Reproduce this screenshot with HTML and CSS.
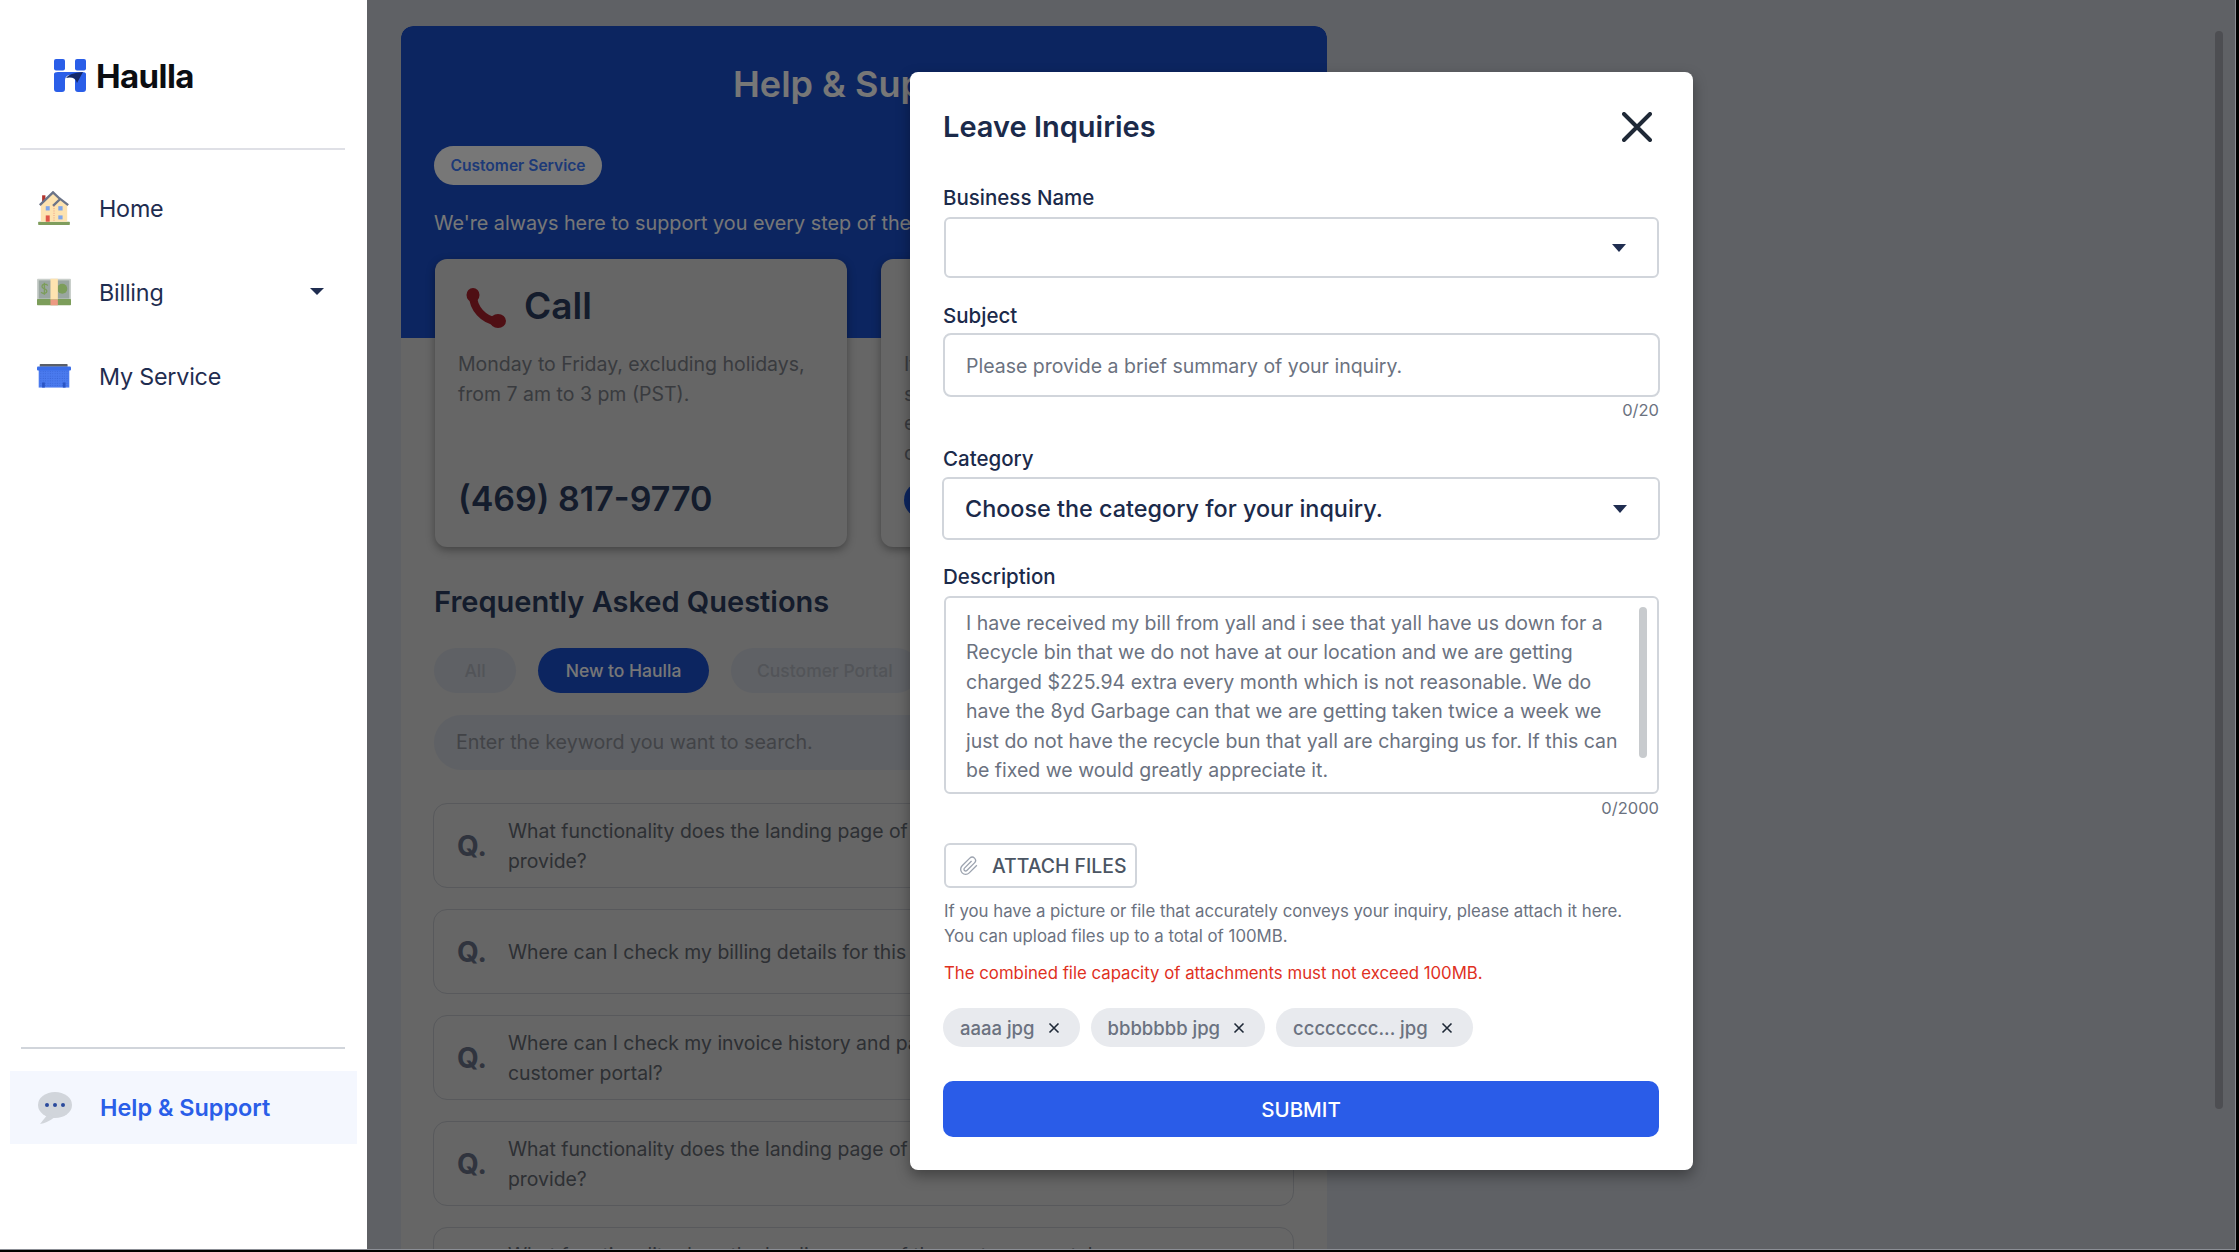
FILE: index.html
```html
<!DOCTYPE html>
<html lang="en">
<head>
<meta charset="utf-8">
<title>Haulla - Help &amp; Support</title>
<link rel="stylesheet" href="styles.css">
</head>
<body>
<div class="app">
  <aside class="sidebar">
    <div class="logo">
      <svg class="logo-mark" viewBox="0 0 32 33"><rect width="11" height="11.5" rx="2" fill="#2a5ee8"/><rect x="21" width="11" height="11.5" rx="2" fill="#2a5ee8"/><path d="M0 15Q0 13 4 13H28Q32 13 32 15V30a3 3 0 0 1-3 3h-5a3 3 0 0 1-3-3v-9a5 5 0 0 0-10 0v9a3 3 0 0 1-3 3H3a3 3 0 0 1-3-3Z" fill="#2a5ee8"/><path d="M12 19Q15 14 29 13L23 24Q21 17 12 19Z" fill="#14296b"/></svg>
      <span class="logo-text">Haulla</span>
    </div>
    <div class="rule"></div>
    <nav class="nav">
      <a class="nav-item">
        <svg class="nav-icon" viewBox="55 65 96 103"><rect x="55" y="158" width="96" height="10" rx="2" fill="#7f9d5d"/><rect x="67" y="78" width="10" height="22" fill="#b3342c"/><path d="M63 108L100 70L122 92L143 108V158H63Z" fill="#fde3b0"/><path d="M60 108L100 69L122 90M100 110L122 89L146 108" fill="none" stroke="#6b7488" stroke-width="7"/><rect x="78" y="111" width="12" height="13" fill="#7fa6ea"/><rect x="116" y="111" width="13" height="13" fill="#7fa6ea"/><rect x="116" y="139" width="13" height="12" fill="#7fa6ea"/><rect x="78" y="139" width="12" height="19" fill="#e05648"/><path d="M103 110V158" stroke="#ec9a82" stroke-width="3" stroke-dasharray="3 4"/></svg>
        <span>Home</span>
      </a>
      <a class="nav-item">
        <svg class="nav-icon" viewBox="52 328 101 79"><rect x="52" y="328" width="101" height="64" rx="3" fill="#c9cfcb"/><rect x="57" y="333" width="91" height="54" fill="#9aa6a0"/><rect x="52" y="388" width="101" height="19" rx="2" fill="#7c9d5a"/><circle cx="127" cy="358" r="15" fill="#7c9d5a"/><path d="M84 348Q76 341 68 347Q64 354 74 358Q84 362 80 369Q72 375 64 368M74 340V376" fill="none" stroke="#7c9d5a" stroke-width="4"/><rect x="92" y="328" width="22" height="62" fill="#fde3b0"/><rect x="92" y="390" width="22" height="17" fill="#ec9a82"/></svg>
        <span>Billing</span>
        <i class="caret caret-nav"></i>
      </a>
      <a class="nav-item">
        <svg class="nav-icon" viewBox="55 590 100 72"><defs><pattern id="bin-dots" width="7" height="7" patternUnits="userSpaceOnUse"><circle cx="3" cy="3" r="1.3" fill="#2a54c4"/></pattern></defs><rect x="63" y="591" width="82" height="8" rx="2" fill="#5a5f68"/><rect x="60" y="608" width="90" height="52" fill="#4a7aee"/><rect x="62" y="612" width="86" height="46" fill="url(#bin-dots)"/><rect x="55" y="598" width="100" height="12" rx="3" fill="#3b6ee8"/><rect x="70" y="645" width="8" height="15" fill="#2a54c4"/><rect x="131" y="645" width="8" height="15" fill="#2a54c4"/></svg>
        <span>My Service</span>
      </a>
    </nav>
    <div class="side-foot">
      <div class="rule rule-foot"></div>
      <a class="help-item">
        <svg class="nav-icon" viewBox="0 0 34 32"><ellipse cx="17" cy="13" rx="17" ry="13" fill="#d1d5db"/><path d="M10 22L2 32Q9 31 17 25Z" fill="#d1d5db"/><circle cx="9" cy="13" r="2" fill="#2b4a9c"/><circle cx="17" cy="13" r="2" fill="#2b4a9c"/><circle cx="25" cy="13" r="2" fill="#2b4a9c"/></svg>
        <span>Help &amp; Support</span>
      </a>
    </div>
  </aside>

  <main class="main">
    <section class="panel">
      <header class="hero">
        <h1 class="hero-title">Help &amp; Support</h1>
        <span class="badge">Customer Service</span>
        <p class="hero-sub">We're always here to support you every step of the way.</p>
      </header>
      <div class="contact-row">
        <article class="contact">
          <div class="contact-head">
            <svg class="phone" viewBox="0 0 41 41"><path d="M8 7C8 20 18 32 33 34" fill="none" stroke="#a9202b" stroke-width="8"/><ellipse cx="8" cy="7" rx="6.5" ry="7" fill="#a9202b"/><ellipse cx="33" cy="33" rx="8" ry="7" fill="#a9202b"/></svg>
            <h2>Call</h2>
          </div>
          <p class="contact-text">Monday to Friday, excluding holidays,<br>from 7 am to 3 pm (PST).</p>
          <div class="contact-number">(469) 817-9770</div>
        </article>
        <article class="contact">
          <div class="contact-head contact-head-inq"><h2>Inquiry</h2></div>
          <p class="contact-text">If you have a question,<br>send us an inquiry and<br>expect a reply soon from<br>our team.</p>
          <div class="contact-action">Leave Inquiries</div>
        </article>
      </div>
      <section class="faq">
        <h2 class="faq-title">Frequently Asked Questions</h2>
        <div class="tabs">
          <span class="tab tab-all">All</span>
          <span class="tab tab-active">New to Haulla</span>
          <span class="tab">Customer Portal</span>
        </div>
        <div class="search">Enter the keyword you want to search.</div>
        <ul class="faq-list">
          <li class="faq-item"><b>Q.</b><span>What functionality does the landing page of the customer portal<br>provide?</span></li>
          <li class="faq-item"><b>Q.</b><span>Where can I check my billing details for this account?</span></li>
          <li class="faq-item"><b>Q.</b><span>Where can I check my invoice history and pay my bill on the<br>customer portal?</span></li>
          <li class="faq-item"><b>Q.</b><span>What functionality does the landing page of the customer portal<br>provide?</span></li>
          <li class="faq-item"><b>Q.</b><span>What functionality does the landing page of the customer portal<br>provide?</span></li>
        </ul>
      </section>
    </section>
    <div class="scrim"></div>
    <div class="page-scroll"></div>
  </main>

  <form class="modal">
    <div class="modal-head">
      <h2>Leave Inquiries</h2>
      <svg class="close" viewBox="0 0 30 30"><path d="M2 2L28 28M28 2L2 28" stroke="#1f2937" stroke-width="4" stroke-linecap="round"/></svg>
    </div>
    <div class="fields">
      <div class="field">
        <label>Business Name</label>
        <div class="select select-name"><i class="caret"></i></div>
      </div>
      <div class="field">
        <label class="label-tight">Subject</label>
        <input class="text-input" type="text" placeholder="Please provide a brief summary of your inquiry.">
        <div class="count">0/20</div>
      </div>
      <div class="field field-category">
        <label class="label-mid">Category</label>
        <div class="select select-category"><span>Choose the category for your inquiry.</span><i class="caret"></i></div>
      </div>
      <div class="field field-desc">
        <label>Description</label>
        <div class="textarea">I have received my bill from yall and i see that yall have us down for a Recycle bin that we do not have at our location and we are getting charged $225.94 extra every month which is not reasonable. We do have the 8yd Garbage can that we are getting taken twice a week we just do not have the recycle bun that yall are charging us for. If this can be fixed we would greatly appreciate it.<i class="thumb"></i></div>
        <div class="count count-desc">0/2000</div>
      </div>
      <div class="attach-block">
        <button class="attach" type="button">
          <svg class="clip" viewBox="0 0 24 24"><path d="M21.44 11.05l-9.19 9.19a6 6 0 0 1-8.49-8.49l9.19-9.19a4 4 0 0 1 5.66 5.66l-9.2 9.19a2 2 0 0 1-2.83-2.83l8.49-8.48" fill="none" stroke="#9ca3af" stroke-width="1.6"/></svg>
          ATTACH FILES
        </button>
        <p class="help-text">If you have a picture or file that accurately conveys your inquiry, please attach it here.<br>You can upload files up to a total of 100MB.</p>
        <p class="error-text">The combined file capacity of attachments must not exceed 100MB.</p>
        <div class="files">
          <span class="file">aaaa jpg <svg class="file-x" viewBox="0 0 12 12"><path d="M1.5 1.5L10.5 10.5M10.5 1.5L1.5 10.5" stroke="#1f2937" stroke-width="1.6"/></svg></span>
          <span class="file">bbbbbbb jpg <svg class="file-x" viewBox="0 0 12 12"><path d="M1.5 1.5L10.5 10.5M10.5 1.5L1.5 10.5" stroke="#1f2937" stroke-width="1.6"/></svg></span>
          <span class="file">cccccccc... jpg <svg class="file-x" viewBox="0 0 12 12"><path d="M1.5 1.5L10.5 10.5M10.5 1.5L1.5 10.5" stroke="#1f2937" stroke-width="1.6"/></svg></span>
        </div>
        <button class="submit" type="button">SUBMIT</button>
      </div>
    </div>
  </form>
</div>
</body>
</html>
```
FILE: styles.css
```css
* { box-sizing: border-box; }
html, body { margin: 0; height: 100%; background: #000; overflow: hidden; }
body { font-family: Inter, "Noto Sans", sans-serif; color: #1f2d50; }
h1, h2, p, ul { margin: 0; padding: 0; }
ul { list-style: none; }

.app { position: relative; display: flex; width: 2236px; height: 1250px; border-right: 1px solid #8b8e95; border-bottom: 1px solid #8b8e95; overflow: hidden; }

/* Sidebar */
.sidebar { flex: 0 0 367px; display: flex; flex-direction: column; background: #fff; }
.logo { display: flex; align-items: center; gap: 10px; padding: 59px 0 0 54px; height: 92px; }
.logo-mark { width: 32px; height: 33px; flex: none; }
.logo-text { margin-top: 2px; font-size: 33px; font-weight: 700; color: #0b0d12; letter-spacing: -0.6px; line-height: 33px; }
.rule { height: 2px; margin: 56px 22px 0 20px; background: #dfe0e6; }
.nav { display: flex; flex-direction: column; margin-top: 16px; }
.nav-item { display: flex; align-items: center; gap: 28px; height: 84px; padding: 0 43px 0 37px; font-size: 23.3px; letter-spacing: -0.2px; }
.nav-icon { width: 34px; height: 34px; flex: none; }
.caret { display: block; width: 0; height: 0; border-left: 7px solid transparent; border-right: 7px solid transparent; border-top: 7px solid #1f2d50; margin-left: auto; }
.caret-nav { margin-top: -1px; }
.side-foot { margin-top: auto; padding-bottom: 105px; }
.rule-foot { margin: 0 22px 0 21px; background: #d1d5db; }
.help-item { display: flex; align-items: center; gap: 28px; height: 73px; margin: 22px 10px 0; padding-left: 28px; background: #f4f7fe; color: #2a5ee8; font-size: 23.4px; font-weight: 600; }

/* Main (under the scrim) */
.main { position: relative; flex: 1; padding: 26px 0 0 34px; background: #cbd0d8; overflow: hidden; }
.panel { width: 926px; background: #dadada; border-radius: 12px 12px 0 0; overflow: hidden; height: 1300px; }
.hero { height: 312px; padding: 33px 33px 0; background: #1a4fcd; color: #fff; border-radius: 12px 12px 0 0; }
.hero-title { font-size: 36px; font-weight: 600; line-height: 50px; text-align: center; }
.badge { display: block; width: 168px; height: 39px; margin-top: 37px; border-radius: 20px; background: #fff; color: #3f7cff; font-size: 15.6px; font-weight: 600; line-height: 39px; text-align: center; }
.hero-sub { margin-top: 23px; font-size: 19.8px; line-height: 30px; white-space: nowrap; }
.contact-row { display: flex; gap: 34px; margin-top: -79px; padding: 0 33px 0 34px; }
.contact { display: flex; flex-direction: column; flex: 0 0 412px; height: 288px; padding: 22px 22px 0 23px; border-radius: 12px; background: #dadada; box-shadow: 0 3px 8px rgba(0,0,0,.35); }
.contact-head { display: flex; align-items: center; gap: 18px; height: 48px; padding-left: 7px; }
.contact-head-inq { padding-left: 40px; }
.phone { width: 41px; height: 41px; margin-top: 7px; flex: none; }
.contact-head h2 { font-size: 37px; font-weight: 600; color: #2b3c5e; }
.contact-text { margin-top: 21px; font-size: 19.5px; line-height: 29.5px; color: #7a7f87; white-space: nowrap; }
.contact-number { margin-top: auto; padding-bottom: 23px; font-size: 34px; font-weight: 600; line-height: 50px; color: #2b3c5e; }
.contact-action { width: 200px; height: 36px; margin-top: auto; margin-bottom: 29px; border-radius: 18px; background: #1a4fcd; color: #fff; text-align: center; font-size: 18px; line-height: 36px; }
.faq { padding: 35px 33px 0; }
.faq-title { font-size: 29px; font-weight: 600; line-height: 40px; color: #2b3c5e; }
.tabs { display: flex; gap: 22px; margin-top: 26px; }
.tab { height: 45px; padding: 0 26px; border-radius: 23px; background: #cbd0d8; color: #b0b4bd; font-size: 17.5px; font-weight: 500; line-height: 45px; white-space: nowrap; }
.tab-all { width: 82px; padding: 0; text-align: center; }
.tab-active { width: 171px; padding: 0; text-align: center; background: #1a4fcd; color: #fff; }
.search { height: 55px; margin-top: 22px; padding-left: 22px; border-radius: 28px; background: #cbd0d8; font-size: 19.7px; line-height: 55px; color: #8d9198; }
.faq-list { display: flex; flex-direction: column; gap: 21px; margin: 33px 0 0 -1px; }
.faq-item { display: flex; align-items: center; height: 85px; padding: 2px 23px 0; border: 1.5px solid #bcbfc5; border-radius: 14px; color: #62676f; font-size: 19.4px; line-height: 29.5px; white-space: nowrap; }
.faq-item b { flex: 0 0 51px; font-size: 28px; font-weight: 700; color: #676f86; }
.scrim { position: absolute; inset: 0; background: rgba(0,0,0,.533); }
.page-scroll { position: absolute; left: 1848px; top: 31px; width: 8px; height: 1078px; border-radius: 4px; background: #4d4e52; }

/* Modal */
.modal { position: absolute; left: 910px; top: 72px; width: 783px; height: 1098px; padding: 32px 34px 0; border-radius: 8px; background: #fff; box-shadow: 0 6px 14px rgba(0,0,0,.35); }
.modal-head { display: flex; align-items: center; justify-content: space-between; height: 44px; padding-right: 7px; }
.modal-head h2 { margin-left: -1px; font-size: 29px; font-weight: 600; color: #1b2a4a; }
.close { width: 30px; height: 30px; margin-top: 2px; }
.fields { display: flex; flex-direction: column; gap: 25px; margin-top: 37px; }
.field { display: flex; flex-direction: column; }
.field-category { margin-top: 1px; }
.field-desc { margin-top: -1px; }
.field label { height: 26px; margin: 0 0 6px -1px; font-size: 20.5px; font-weight: 500; line-height: 26px; color: #1b2a4a; }
.field .label-tight { margin-bottom: 4px; }
.field .label-mid { margin-bottom: 5px; }
.select { display: flex; align-items: center; border: 2px solid #d1d5db; border-radius: 6px; padding: 0 31px 0 21px; }
.select .caret { width: 0; border-left-width: 7px; border-right-width: 7px; border-top-width: 8px; }
.select-name { height: 61px; }
.select-category { height: 63px; margin: 0 0 0 -2px; width: 718px; font-size: 23.4px; font-weight: 500; color: #1b2a4a; }
.text-input { display: block; width: 717px; height: 64px; margin-left: -1px; padding: 2px 21px 0; border: 2px solid #d1d5db; border-radius: 8px; font: 400 19.5px Inter, sans-serif; outline: none; }
.text-input::placeholder { color: #6b7280; opacity: 1; }
.count { margin-top: 3px; height: 20px; font-size: 16.5px; line-height: 20px; color: #6b7280; text-align: right; }
.count-desc { margin-top: 4px; }
.textarea { position: relative; height: 198px; padding: 11px 34px 0 20px; border: 2px solid #d1d5db; border-radius: 6px; font-size: 19.5px; line-height: 29.4px; color: #6b7280; }
.thumb { position: absolute; right: 10px; top: 9px; width: 8px; height: 151px; border-radius: 4px; background: #c8cbce; }
.attach-block { display: flex; flex-direction: column; align-items: flex-start; }
.attach { display: flex; align-items: center; gap: 13px; width: 193px; height: 45px; padding: 0 0 0 13px; border: 2px solid #d1d5db; border-radius: 6px; background: #fff; font: 500 19.4px Inter, sans-serif; color: #4b5563; white-space: nowrap; }
.clip { width: 20px; height: 20px; flex: none; }
.help-text { margin-top: 11px; font-size: 16.8px; line-height: 25px; color: #6b7280; white-space: nowrap; }
.error-text { margin-top: 12px; font-size: 16.8px; line-height: 25px; color: #e0301e; white-space: nowrap; }
.files { display: flex; gap: 11px; margin: 22px 0 0 -1px; }
.file { display: flex; align-items: center; height: 39px; padding: 0 20px 0 17px; border-radius: 20px; background: #e8eaee; color: #6b7280; font-size: 18.5px; font-weight: 500; white-space: nowrap; }
.file-x { width: 12px; height: 12px; margin-left: 13px; }
.submit { width: 716px; height: 56px; margin: 34px 0 0 -1px; border: 0; border-radius: 10px; background: #2a5ce8; color: #fff; font: 500 20.5px Inter, sans-serif; }
```
